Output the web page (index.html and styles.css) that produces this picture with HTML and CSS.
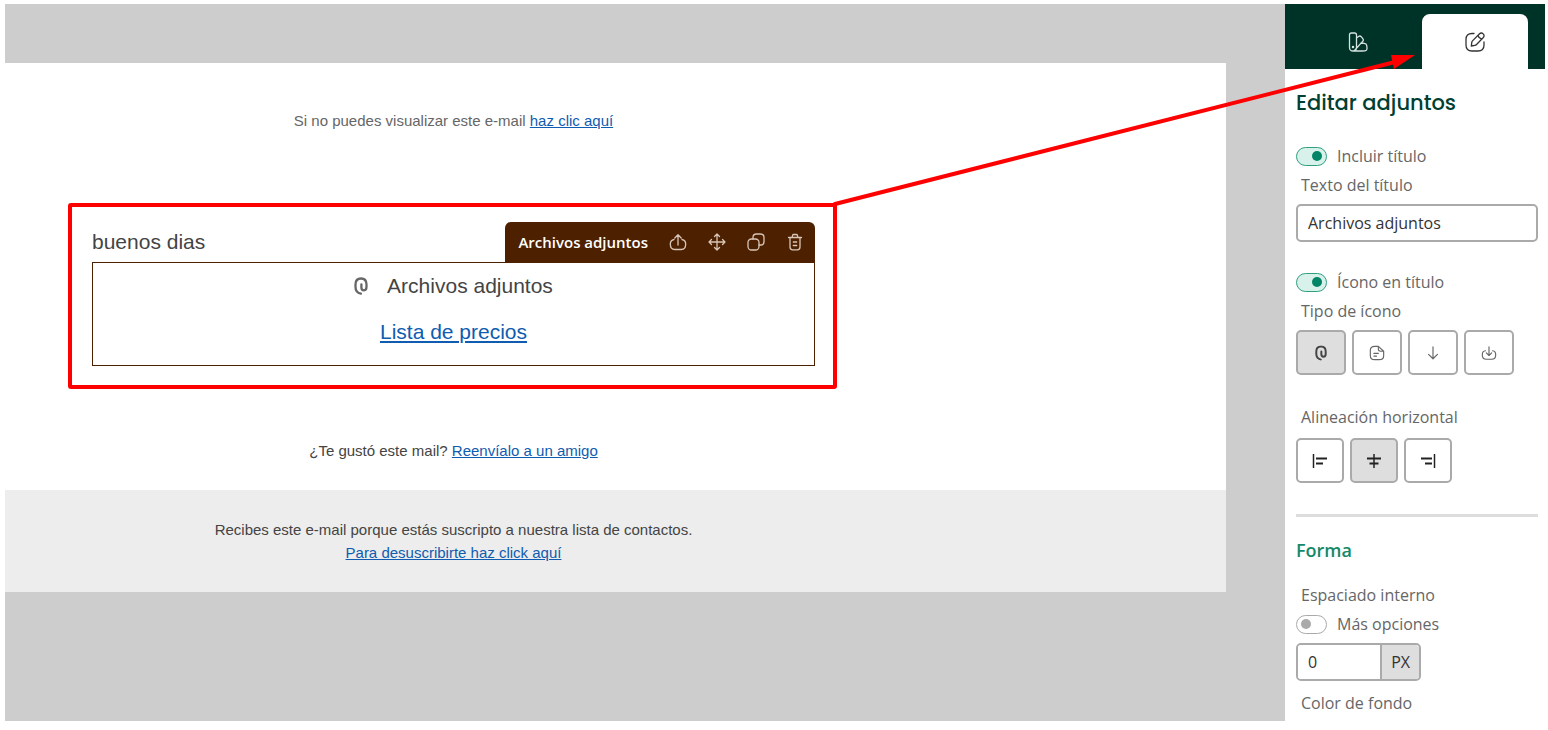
FILE: index.html
```html
<!DOCTYPE html>
<html lang="es">
<head>
    <meta charset="UTF-8">
    <meta name="viewport" content="width=device-width, initial-scale=1.0">
    <link rel="stylesheet" href="styles.css">
    <title>Editar adjuntos</title>
</head>
<body>
    <svg class="symbols" aria-hidden="true">
        <symbol id="clip" viewBox="0 0 14 18">
            <path d="M6.800 16.700C3.500 16 1.500 13.500 1.500 10V7.500C1.500 3.800 3.600 1.500 7 1.500s5.500 2.300 5.500 6v2.300c0 2.200-.8 3.500-2.500 3.500s-2.600-1-2.600-2.800V7.300" />
        </symbol>
    </svg>

    <div class="app">
        <main class="canvas">
            <div class="mail">
                <div class="column">
                    <p class="mail-text top-text">Si no puedes visualizar este e-mail <a href="#">haz clic aquí</a></p>

                    <div class="block">
                        <div class="block-head">
                            <span class="greeting">buenos dias</span>
                            <div class="toolbar">
                                <span class="toolbar-name">Archivos adjuntos</span>
                                <button aria-label="Guardar">
                                    <svg class="icon" viewBox="0 0 18 18"><path d="M9 12V2M5.800 5L9 1.700 12.200 5M5 6.500C2.800 7 1.300 8.700 1.300 11c0 3.200 1.700 5.500 4.500 5.500h6.400c2.800 0 4.500-2.300 4.500-5.500 0-2.300-1.500-4-3.700-4.500" /></svg>
                                </button>
                                <button aria-label="Mover">
                                    <svg class="icon" viewBox="0 0 18 18"><path d="M9 1v16M1 9h16M6.500 3.500L9 1l2.500 2.500M6.500 14.500L9 17l2.500-2.500M3.500 6.500L1 9l2.500 2.500M14.500 6.500L17 9l-2.500 2.500" /></svg>
                                </button>
                                <button aria-label="Duplicar">
                                    <svg class="icon" viewBox="0 0 18 18"><rect x="1" y="6" width="11" height="11" rx="3.500" /><path d="M6 6V4.500C6 2.300 7.300 1 9.500 1h4C15.700 1 17 2.300 17 4.500v4c0 2.200-1.300 3.500-3.500 3.500H12" /></svg>
                                </button>
                                <button aria-label="Eliminar">
                                    <svg class="icon" viewBox="0 0 18 18"><path d="M2.500 4.500h13M6 4.500l.6-2.200c.1-.5.500-.8 1-.8h2.800c.5 0 .9.300 1 .8l.6 2.200M4 4.500V14c0 2 .8 2.800 2.600 2.800h4.800c1.800 0 2.600-.8 2.600-2.800V4.500M7.300 9h3.400M7.300 12.500h3.400" /></svg>
                                </button>
                            </div>
                        </div>
                        <div class="attachments">
                            <p class="attach-title"><svg class="clip" viewBox="0 0 14 18"><use href="#clip" /></svg>Archivos adjuntos</p>
                            <p><a href="#">Lista de precios</a></p>
                        </div>
                    </div>

                    <p class="mail-text">¿Te gustó este mail? <a href="#">Reenvíalo a un amigo</a></p>
                </div>
                <footer class="mail-footer">
                    <p class="mail-text">Recibes este e-mail porque estás suscripto a nuestra lista de contactos.<br>
                    <a href="#">Para desuscribirte haz click aquí</a></p>
                </footer>
            </div>
        </main>

        <aside class="sidebar">
            <nav class="tabs">
                <button class="tab" aria-label="Estilos">
                    <svg class="icon tab-icon" viewBox="0 0 20 20"><path d="M3.500 1h3C8 1 8.500 1.700 8.500 3v12.500c0 2-1.300 3.500-3.500 3.500s-3.500-1.500-3.500-3.500V3c0-1.300.5-2 2-2zM8.500 6l2-1.500c1-.8 1.900-.7 2.700.2l1.600 2c.8 1 .7 1.900-.2 2.700L6.500 18.500M13 11l3.300.3c1.300.1 2.200.8 2.400 2l.3 2.700c.2 1.600-.6 2.600-2 2.800-1 .2-8 .2-12 .2" /><circle cx="5" cy="15" r=".6" /></svg>
                </button>
                <button class="tab active" aria-label="Editar">
                    <svg class="icon tab-icon" viewBox="0 0 20 20"><path d="M9 1.500H7C3 1.500 1 3.500 1 7.500v5.500c0 4 2 6 6 6h6c4 0 6-2 6-6v-3M6.300 14l.5-3.700c.1-.6.300-1 .7-1.400L14.300 2c1.300-1.300 2.700-1.300 3.900-.1s1.200 2.600-.1 3.900l-6.800 6.900c-.4.400-.8.600-1.400.7zM13 3.500c.5 1.800 1.900 3.200 3.700 3.700" /></svg>
                </button>
            </nav>

            <div class="panel">
                <h1>Editar adjuntos</h1>

                <div class="switch-row">
                    <input type="checkbox" class="switch" id="showTitle" checked>
                    <label for="showTitle">Incluir título</label>
                </div>
                <label class="field-label" for="titleText">Texto del título</label>
                <input type="text" class="text-input" id="titleText" value="Archivos adjuntos">

                <div class="switch-row icon-switch">
                    <input type="checkbox" class="switch" id="showIcon" checked>
                    <label for="showIcon">Ícono en título</label>
                </div>
                <span class="field-label">Tipo de ícono</span>
                <div class="options icon-options">
                    <button class="option selected" aria-label="Clip"><svg class="clip" viewBox="0 0 14 18"><use href="#clip" /></svg></button>
                    <button class="option" aria-label="Archivo">
                        <svg class="icon" viewBox="0 0 18 18"><path d="M10.500 1.500h-4C3.300 1.500 1.500 3 1.500 6v6c0 3 1.800 4.500 5 4.500h5c3.200 0 5-1.500 5-4.500V7zM10.500 1.500v3C10.500 6.500 11.500 7 13 7h3.500M5.500 9.500h5M5.500 12.500h3" /></svg>
                    </button>
                    <button class="option" aria-label="Flecha">
                        <svg class="icon" viewBox="0 0 18 18"><path d="M9 2v13.500M4 10.500l5 5 5-5" /></svg>
                    </button>
                    <button class="option" aria-label="Descargar">
                        <svg class="icon" viewBox="0 0 18 18"><path d="M9 2v9.500M6 8.800l3 3 3-3M5 6.500C2.800 6.800 1.500 8.300 1.500 10.500v1c0 3 1.500 4.500 4.500 4.500h6c3 0 4.500-1.500 4.500-4.500v-1c0-2.200-1.300-3.700-3.500-4" /></svg>
                    </button>
                </div>

                <span class="field-label align-label">Alineación horizontal</span>
                <div class="options align-options">
                    <button class="option" aria-label="Izquierda">
                        <svg class="align-icon" viewBox="0 0 16 14"><path class="thin" d="M1.500 0v14" /><path d="M4 4.500h11M4 9.500h7" /></svg>
                    </button>
                    <button class="option selected" aria-label="Centro">
                        <svg class="align-icon" viewBox="0 0 16 14"><path class="thin" d="M8 0v14" /><path d="M1 4.500h14M3.500 9.500h9" /></svg>
                    </button>
                    <button class="option" aria-label="Derecha">
                        <svg class="align-icon" viewBox="0 0 16 14"><path class="thin" d="M14.500 0v14" /><path d="M1 4.500h11M5 9.500h7" /></svg>
                    </button>
                </div>

                <hr>

                <h2>Forma</h2>
                <label class="field-label" for="padding">Espaciado interno</label>
                <div class="switch-row">
                    <input type="checkbox" class="switch" id="moreOptions">
                    <label for="moreOptions">Más opciones</label>
                </div>
                <div class="unit-field">
                    <input type="text" id="padding" value="0">
                    <span>PX</span>
                </div>
                <span class="field-label">Color de fondo</span>
            </div>
        </aside>

        <!-- red marks drawn over the editor -->
        <svg class="marks" aria-hidden="true">
            <rect x="65" y="201" width="765" height="182" rx="1" />
            <path d="M830 200L1390 58" />
            <path class="head" d="M1410 51L1386 51L1389 65Z" />
        </svg>
    </div>
</body>
</html>
```
FILE: styles.css
```css
* {
    box-sizing: border-box;
}
body {
    margin: 0;
    padding: 4px 3px 9px 5px;
    background-color: #fff;
    font-family: "Open Sans", sans-serif;
    font-size: 16px;
    color: #666;
}
p, h1, h2 {
    margin: 0;
}
a {
    color: #0f5cb0;
}
button {
    font: inherit;
    padding: 0;
    border: none;
    background: none;
    color: inherit;
    cursor: pointer;
}
svg {
    display: block;
    fill: none;
    stroke: currentColor;
    stroke-linecap: round;
    stroke-linejoin: round;
}
.symbols {
    position: absolute;
    width: 0;
    height: 0;
}
.app {
    position: relative;
    display: flex;
    height: calc(100vh - 13px);
    overflow: hidden;
}

/* email canvas */
.canvas {
    flex: 1;
    padding: 59px 59px 0 0;
    background-color: #cdcdcd;
    font-family: "Liberation Sans", Arial, sans-serif;
    color: #444;
}
.mail {
    background-color: #fff;
}
.column {
    max-width: 810px;
    padding: 48px 0 29px 87px;
}
.mail-text {
    font-size: 15px;
    line-height: 20px;
    text-align: center;
}
.top-text {
    color: #666;
}
.block {
    margin: 91px 0 75px;
}
.block-head {
    display: flex;
    justify-content: space-between;
    align-items: center;
    height: 40px;
}
.greeting {
    font-size: 21px;
}
.toolbar {
    display: flex;
    align-items: center;
    gap: 21px;
    height: 40px;
    padding: 0 11px 0 13px;
    border-radius: 6px 6px 0 0;
    background-color: #4d2000;
    color: #d9c6b8;
    font-family: "Open Sans", sans-serif;
}
.toolbar-name {
    color: #fff;
    font-size: 15px;
    font-weight: 600;
}
.icon {
    width: 18px;
    height: 18px;
    stroke-width: 1.3;
}
.attachments {
    padding-bottom: 10px;
    border: 1px solid #4d2000;
    font-size: 21px;
    line-height: 46px;
    text-align: center;
}
.attach-title {
    display: flex;
    justify-content: center;
    align-items: center;
    gap: 19px;
}
.clip {
    width: 14px;
    height: 18px;
    color: #666;
    stroke-width: 2.3;
}
.mail-footer {
    padding: 28px 0;
    background-color: #ededed;
}
.mail-footer .mail-text {
    max-width: 810px;
    padding-left: 87px;
    line-height: 23px;
}

/* settings */
.sidebar {
    width: 260px;
    background-color: #fff;
}
.tabs {
    display: flex;
    gap: 10px;
    height: 65px;
    padding: 10px 17px 0 20px;
    background-color: #003328;
}
.tab {
    display: flex;
    flex: 1;
    justify-content: center;
    align-items: center;
    border-radius: 8px 8px 0 0;
    color: #d5e3df;
}
.tab.active {
    background-color: #fff;
    color: #333;
}
.tab-icon {
    width: 20px;
    height: 20px;
}
.panel {
    padding: 19px 7px 0 11px;
}
h1 {
    margin-bottom: 24px;
    color: #003f32;
    font-family: Poppins, Inter, sans-serif;
    font-size: 21px;
    font-weight: 500;
    line-height: 30px;
}
h2 {
    margin-bottom: 16px;
    color: #138968;
    font-size: 18px;
    font-weight: 600;
    line-height: 28px;
}
.switch-row {
    display: flex;
    align-items: center;
    gap: 10px;
    height: 28px;
}
.icon-switch {
    margin-top: 26px;
}
.switch {
    display: flex;
    align-items: center;
    appearance: none;
    width: 31px;
    height: 19px;
    margin: 0;
    padding: 0 4px;
    border: 1px solid #aaa;
    border-radius: 10px;
    background-color: #fff;
}
.switch::before {
    content: "";
    width: 10px;
    height: 10px;
    border-radius: 50%;
    background-color: #aaa;
}
.switch:checked {
    justify-content: flex-end;
    border-color: #2f9f80;
    background-color: #d8f1ea;
}
.switch:checked::before {
    background-color: #008566;
}
.field-label {
    display: block;
    padding-left: 5px;
    line-height: 30px;
}
.text-input {
    display: block;
    width: 100%;
    height: 38px;
    margin-top: 4px;
    padding: 0 10px;
    border: 2px solid #aaa;
    border-radius: 5px;
    color: #333;
    font: inherit;
}
.options {
    display: flex;
    gap: 6px;
    margin-top: 4px;
}
.align-options {
    margin-top: 6px;
}
.option {
    display: flex;
    justify-content: center;
    align-items: center;
    width: 50px;
    height: 45px;
    border: 2px solid #aaa;
    border-radius: 5px;
}
.align-options .option {
    width: 48px;
}
.option.selected {
    background-color: #dedede;
}
.option .icon {
    width: 16px;
    height: 16px;
}
.option .clip {
    width: 12px;
    height: 16px;
    color: #444;
}
.align-label {
    margin-top: 27px;
}
.align-icon {
    width: 16px;
    height: 14px;
    color: #222;
    stroke-width: 2;
    stroke-linecap: butt;
}
.thin {
    stroke-width: 1.5;
}
hr {
    height: 3px;
    margin: 31px 0 19px;
    border: none;
    background-color: #ddd;
}
.unit-field {
    display: flex;
    width: 125px;
    height: 38px;
    margin: 5px 0 7px;
    border: 2px solid #aaa;
    border-radius: 5px;
    overflow: hidden;
    color: #333;
}
.unit-field input {
    flex: 1;
    min-width: 0;
    padding: 0 10px;
    border: none;
    color: inherit;
    font: inherit;
}
.unit-field span {
    padding: 0 9px;
    border-left: 2px solid #aaa;
    background-color: #dedede;
    line-height: 34px;
}

.marks {
    position: absolute;
    inset: 0;
    width: 100%;
    height: 100%;
    stroke: #f00;
    stroke-width: 4;
    pointer-events: none;
}
.marks .head {
    fill: #f00;
    stroke: none;
}
```
